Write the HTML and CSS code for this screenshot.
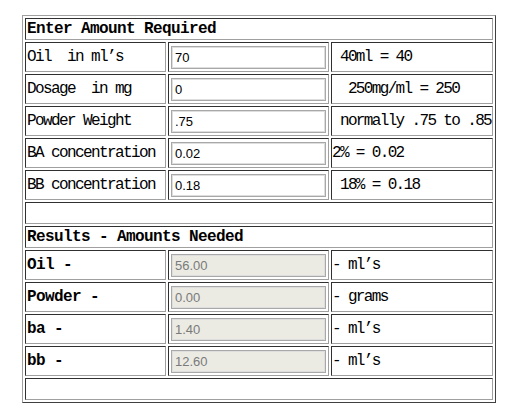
FILE: index.html
```html
<!DOCTYPE html>
<html lang="en">
<head>
    <meta charset="UTF-8">
    <title>Amount Calculator</title>
    <link rel="stylesheet" href="styles.css">
</head>
<body>
    <table class="calc">
        <colgroup>
            <col class="c-label">
            <col class="c-input">
            <col class="c-note">
        </colgroup>
        <tr class="head">
            <td colspan="3" class="bold">Enter Amount Required</td>
        </tr>
        <tr>
            <td class="label">Oil&nbsp;&nbsp;in ml’s</td>
            <td><input type="text" id="oil" value="70"></td>
            <td class="note">&nbsp;40ml = 40</td>
        </tr>
        <tr>
            <td class="label">Dosage&nbsp;&nbsp;in mg</td>
            <td><input type="text" id="dosage" value="0"></td>
            <td class="note">&nbsp;&nbsp;250mg/ml = 250</td>
        </tr>
        <tr>
            <td class="label">Powder Weight</td>
            <td><input type="text" id="powder" value=".75"></td>
            <td class="note">&nbsp;normally .75 to .85</td>
        </tr>
        <tr>
            <td class="label">BA concentration</td>
            <td><input type="text" id="ba" value="0.02"></td>
            <td class="note">2% = 0.02</td>
        </tr>
        <tr>
            <td class="label">BB concentration</td>
            <td><input type="text" id="bb" value="0.18"></td>
            <td class="note">&nbsp;18% = 0.18</td>
        </tr>
        <tr class="blank">
            <td colspan="3"></td>
        </tr>
        <tr class="head">
            <td colspan="3" class="bold">Results - Amounts Needed</td>
        </tr>
        <tr>
            <td class="label bold">Oil -</td>
            <td><input type="text" class="out" value="56.00" readonly></td>
            <td class="note">- ml’s</td>
        </tr>
        <tr>
            <td class="label bold">Powder -</td>
            <td><input type="text" class="out" value="0.00" readonly></td>
            <td class="note">- grams</td>
        </tr>
        <tr>
            <td class="label bold">ba -</td>
            <td><input type="text" class="out" value="1.40" readonly></td>
            <td class="note">- ml’s</td>
        </tr>
        <tr>
            <td class="label bold">bb -</td>
            <td><input type="text" class="out" value="12.60" readonly></td>
            <td class="note">- ml’s</td>
        </tr>
        <tr class="blank">
            <td colspan="3"></td>
        </tr>
    </table>
</body>
</html>
```

FILE: styles.css
```css
body {
    margin: 15px 22px;
    background-color: #fff;
    font-family: "Liberation Mono", monospace;
    font-size: 16px;
    color: #000;
}
.calc {
    border-collapse: separate;
    border-spacing: 2px;
    border: 1px solid;
    border-color: #a0a0a0 #404040 #404040 #a0a0a0;
    width: 474px;
    table-layout: fixed;
}
.c-label {
    width: 141px;
}
.c-input {
    width: 161px;
}
.c-note {
    width: 162px;
}
.calc td {
    border: 1px solid;
    border-color: #303030 #a0a0a0 #a0a0a0 #303030;
    padding: 0 1px;
    height: 28px;
    white-space: nowrap;
    letter-spacing: -1.6px;
    vertical-align: middle;
}
.calc td.note {
    padding-left: 0;
    letter-spacing: -1.65px;
}
.calc .head td,
.calc .blank td {
    height: 20px;
}
.bold {
    font-weight: bold;
    letter-spacing: -0.6px !important;
}
input {
    display: block;
    margin: 0 0 0 1px;
    width: 155px;
    height: 23px;
    box-sizing: border-box;
    padding: 0 3px;
    border: 1px solid #a8a8a8;
    box-shadow: inset 0 0 0 1px #dedede;
    font-family: "Liberation Sans", Arial, sans-serif;
    font-size: 13px;
    color: #000;
    background-color: #fff;
    letter-spacing: 0;
}
input.out {
    background-color: #ebebe4;
    color: #7a7a7a;
}
```
